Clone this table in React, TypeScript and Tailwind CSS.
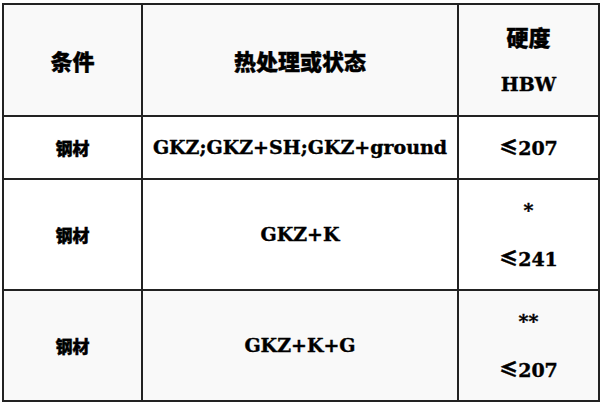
const latin = "font-['DejaVu_Serif','Noto_Sans_CJK_SC',serif]";
const cjk = "font-['Noto_Sans_CJK_SC',sans-serif] font-black";

function Le({ children }: { children: React.ReactNode }) {
  // the ≤ sign comes from the CJK font in the original (slanted lower bar)
  return <span className={cjk}>{children}</span>;
}

const rows = [
  { cond: "钢材", heat: "GKZ;GKZ+SH;GKZ+ground", hard: [<><Le>≤</Le>207</>], h: "h-[63px]", bg: "bg-white" },
  { cond: "钢材", heat: "GKZ+K", hard: ["*", <><Le>≤</Le>241</>], h: "h-[111px]", bg: "bg-white" },
  { cond: "钢材", heat: "GKZ+K+G", hard: ["**", <><Le>≤</Le>207</>], h: "h-[111px]", bg: "bg-[#f9f9f9]" },
];

export default function App() {
  return (
    <div className="w-[600px] h-[404px] bg-white pl-[2px] pt-[3px]">
      <table className={`w-[596px] table-fixed border-collapse border-2 border-[#222] text-black font-bold [-webkit-text-stroke:0.4px_black] ${latin}`}>
        <colgroup>
          <col className="w-[139px]" />
          <col className="w-[316px]" />
          <col className="w-[141px]" />
        </colgroup>
        <thead>
          <tr className="h-[112px] bg-[#f9f9f9]">
            <th className={`border-2 border-[#222] text-center align-middle text-[22px] ${cjk}`}>条件</th>
            <th className={`border-2 border-[#222] text-center align-middle text-[22px] ${cjk}`}>热处理或状态</th>
            <th className="border-2 border-[#222] text-center align-middle">
              <div className={`leading-[48px] text-[22px] ${cjk}`}>硬度</div>
              <div className="leading-[48px] text-[19px]">HBW</div>
            </th>
          </tr>
        </thead>
        <tbody>
          {rows.map((r, i) => (
            <tr key={i} className={`${r.h} ${r.bg}`}>
              <td className={`border-2 border-[#222] text-center align-middle text-[17px] ${cjk}`}>{r.cond}</td>
              <td className="border-2 border-[#222] text-center align-middle text-[19px]">{r.heat}</td>
              <td className="border-2 border-[#222] text-center align-middle text-[19px]">
                {r.hard.map((x, j) => (
                  <div key={j} className="leading-[48px]">{x}</div>
                ))}
              </td>
            </tr>
          ))}
        </tbody>
      </table>
    </div>
  );
}
